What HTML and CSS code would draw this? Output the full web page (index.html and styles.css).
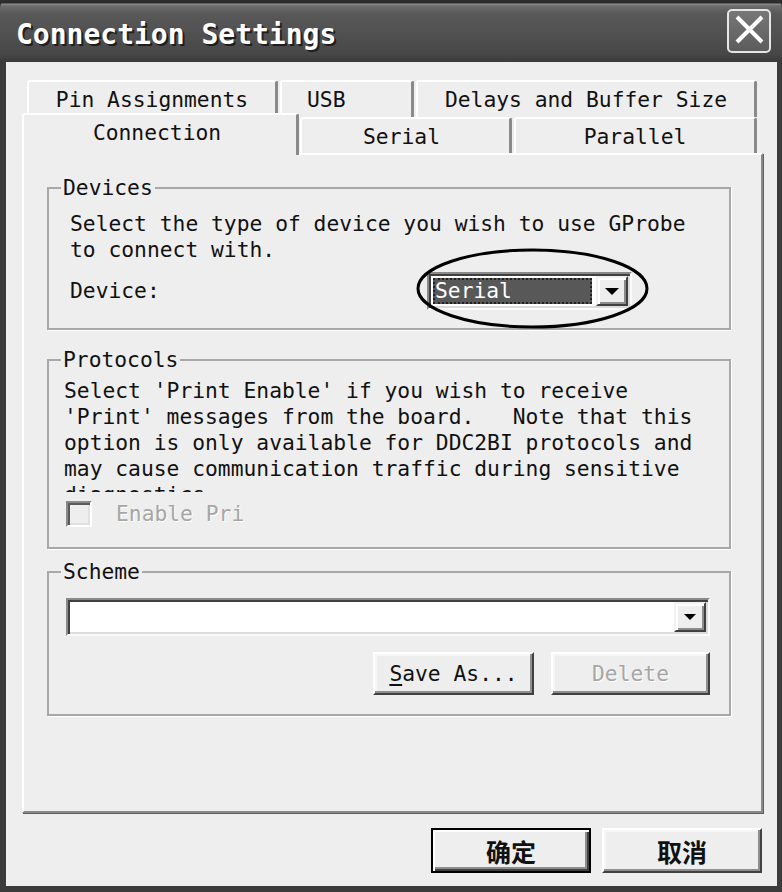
FILE: index.html
```html
<!DOCTYPE html>
<html>
<head>
<meta charset="utf-8">
<title>Connection Settings</title>
<link rel="stylesheet" href="styles.css">
</head>
<body>
<div class="window">
  <div class="titlebar">
    <span class="title">Connection Settings</span>
    <span class="close">
      <svg width="40" height="40" viewBox="0 0 40 40"><path d="M8 6 L33 31 M33 6 L8 31" stroke="#fff" stroke-width="4" fill="none"/></svg>
    </span>
  </div>
  <div class="client">
    <div class="tabs">
      <div class="tabrow back">
        <div class="tab t-pin">Pin Assignments</div>
        <div class="tab t-usb">USB</div>
        <div class="tab t-delays">Delays and Buffer Size</div>
      </div>
      <div class="tabrow front">
        <div class="tab selected t-conn">Connection</div>
        <div class="tab t-serial">Serial</div>
        <div class="tab t-parallel">Parallel</div>
      </div>
    </div>
    <div class="panel">
      <fieldset class="group g-devices">
        <legend>Devices</legend>
        <div class="inner">
          <p class="text">Select the type of device you wish to use GProbe<br>to connect with.</p>
          <div class="device-row">
            <span class="label">Device:</span>
            <div class="combo combo-device">
              <span class="sel">Serial</span>
              <span class="drop"><span class="arrow"></span></span>
              <svg class="ring" width="233" height="81" viewBox="0 0 233 81"><ellipse cx="116.5" cy="40.5" rx="114.5" ry="38.5" fill="none" stroke="#000" stroke-width="3"/></svg>
            </div>
          </div>
        </div>
      </fieldset>
      <fieldset class="group g-protocols">
        <legend>Protocols</legend>
        <div class="inner">
          <p class="text clip">Select 'Print Enable' if you wish to receive
'Print' messages from the board.   Note that this
option is only available for DDC2BI protocols and
may cause communication traffic during sensitive
diagnostics.</p>
          <div class="check-row">
            <span class="checkbox"></span>
            <span class="disabled-text">Enable Pri</span>
          </div>
        </div>
      </fieldset>
      <fieldset class="group g-scheme">
        <legend>Scheme</legend>
        <div class="inner">
          <div class="combo combo-scheme">
            <span class="field"></span>
            <span class="drop small"><span class="arrow"></span></span>
          </div>
          <div class="btn-row">
            <button class="btn btn-save"><u>S</u>ave As...</button>
            <button class="btn btn-delete" disabled>Delete</button>
          </div>
        </div>
      </fieldset>
    </div>
    <div class="footer">
      <button class="btn cjk default">确定</button>
      <button class="btn cjk">取消</button>
    </div>
  </div>
</div>
</body>
</html>
```

FILE: styles.css
```css
* { box-sizing: border-box; }
html, body { margin: 0; padding: 0; }
body {
  width: 782px;
  height: 892px;
  background: #2e2e2e;
  font-family: "DejaVu Sans Mono", "Liberation Mono", monospace;
  font-size: 21.3px;
  color: #111;
  overflow: hidden;
}

.window {
  width: 782px;
  height: 892px;
  display: flex;
  flex-direction: column;
  background: #3b3b3b;
  border-radius: 8px 8px 0 0;
  overflow: hidden;
}

.titlebar {
  height: 62px;
  flex: none;
  display: flex;
  align-items: center;
  justify-content: space-between;
  padding: 0 11px 0 16px;
  background: linear-gradient(#2c2c2c 0, #2c2c2c 3px, #8e8e8e 4px, #6c6c6c 6px, #585858 14px, #4f4f4f 38px, #474747 54px, #3a3a3a 62px);
}

.title {
  font-family: "DejaVu Sans Mono", monospace;
  font-weight: bold;
  font-size: 28px;
  color: #fff;
  text-shadow: 2px 2px 0 #1e1e1e;
  padding-top: 6px;
}

.close {
  width: 44px;
  height: 44px;
  border: 2px solid #e6e6e6;
  border-radius: 5px;
  background: linear-gradient(#777, #5c5c5c);
  display: flex;
}

.client {
  flex: 1;
  margin: 0 5px 6px 6px;
  background: #eeeeee;
  display: flex;
  flex-direction: column;
}

/* tabs */
.tabs {
  height: 91px;
  flex: none;
  padding-top: 18px;
  display: flex;
  flex-direction: column;
}
.tabrow { display: flex; }
.back { height: 37px; padding-left: 21px; }
.front { height: 36px; padding-left: 16px; }

.tab {
  background: #eeeeee;
  border-top: 2px solid #fff;
  border-left: 2px solid #fff;
  border-right: 3px solid #8a8a8a;
  border-radius: 3px 3px 0 0;
  display: flex;
  align-items: center;
  justify-content: center;
  white-space: pre;
}
.t-pin { width: 251px; }
.t-usb { width: 134px; margin-left: 2px; justify-content: flex-start; padding-left: 25px; }
.t-delays { width: 341px; margin-left: 2px; }
.t-conn {
  width: 277px;
  height: 42px;
  margin-top: -4px;
  padding-bottom: 6px;
  padding-right: 6px;
  position: relative;
  z-index: 2;
}
.t-serial { width: 212px; margin-left: 1px; padding-right: 8px; }
.t-parallel { width: 243px; margin-left: 2px; }

/* panel */
.panel {
  margin-left: 16px;
  width: 741px;
  height: 660px;
  flex: none;
  border: 2px solid;
  border-color: #fff #8a8a8a #8a8a8a #fff;
  box-shadow: 1px 1px 0 #5e5e5e;
  padding: 20px 0 0 23px;
  display: flex;
  flex-direction: column;
  position: relative;
  z-index: 1;
}

.group {
  margin: 0;
  padding: 0;
  width: 684px;
  min-inline-size: 0;
  border: 2px solid #a8a8a8;
  box-shadow: 1px 1px 0 #fff;
}
.group legend {
  margin-left: 12px;
  padding: 0 2px;
  line-height: 26px;
}
.text {
  margin: 0;
  line-height: 26px;
  white-space: pre;
}

.g-devices .inner { padding: 10px 0 18px 21px; }
.device-row {
  margin-top: 9px;
  display: flex;
  align-items: center;
  height: 38px;
}
.label { width: 357px; line-height: 26px; }

.g-protocols { margin-top: 17px; }
.g-protocols .inner { padding: 5px 0 20px 15px; }
.clip { height: 114px; overflow: hidden; }
.check-row {
  margin-top: 9px;
  display: flex;
  align-items: center;
  height: 26px;
  padding-left: 2px;
}
.checkbox {
  width: 26px;
  height: 26px;
  border: 2px solid;
  border-color: #8a8a8a #fff #fff #8a8a8a;
  box-shadow: inset 2px 2px 0 #5a5a5a, inset -2px -2px 0 #e0e0e0;
  background: #eeeeee;
}
.disabled-text {
  margin-left: 24px;
  color: #a6a6a6;
  text-shadow: 1px 1px 0 #fff;
  line-height: 26px;
}

.g-scheme { margin-top: 10px; }
.g-scheme .inner { padding: 13px 19px 19px 17px; }

/* combo */
.combo {
  height: 38px;
  border: 2px solid;
  border-color: #8a8a8a #fbfbfb #fbfbfb #8a8a8a;
  box-shadow: inset 2px 2px 0 #404040, inset -2px -2px 0 #dcdcdc;
  background: #fff;
  display: flex;
  padding: 2px;
  position: relative;
}
.combo-device { width: 205px; }
.combo-scheme { width: 644px; }
.sel {
  flex: 1;
  margin: 2px 4px 2px 2px;
  background: #585858;
  color: #fff;
  outline: 2px dotted #222;
  outline-offset: -2px;
  line-height: 26px;
  padding-left: 2px;
}
.field { flex: 1; }
.drop {
  width: 32px;
  border: 2px solid;
  border-color: #f2f2f2 #404040 #404040 #f2f2f2;
  box-shadow: inset 2px 2px 0 #fff, inset -2px -2px 0 #8c8c8c;
  background: #eeeeee;
  display: flex;
  align-items: center;
  justify-content: center;
}
.arrow {
  width: 0;
  height: 0;
  border-left: 7px solid transparent;
  border-right: 7px solid transparent;
  border-top: 7px solid #000;
}
.small .arrow {
  border-left-width: 6px;
  border-right-width: 6px;
  border-top-width: 6px;
}
.ring {
  position: absolute;
  left: -13px;
  top: -26px;
  pointer-events: none;
}

/* buttons */
.btn-row {
  margin-top: 16px;
  display: flex;
  justify-content: flex-end;
  gap: 17px;
}
.btn {
  font-family: "DejaVu Sans Mono", "Liberation Mono", monospace;
  font-size: 21.3px;
  color: #111;
  height: 43px;
  background: #eeeeee;
  border: 2px solid;
  border-color: #fff #404040 #404040 #fff;
  box-shadow: inset -2px -2px 0 #8e8e8e, inset 2px 2px 0 #f6f6f6;
  padding: 0;
  margin: 0;
}
.btn u { text-decoration-thickness: 2px; text-underline-offset: 3px; }
.btn-save { width: 161px; }
.btn-delete { width: 159px; color: #a6a6a6; text-shadow: 1px 1px 0 #fff; }

.footer {
  display: flex;
  justify-content: flex-end;
  gap: 11px;
  padding: 15px 15px 0 0;
}
.cjk {
  font-family: "Noto Sans CJK SC", sans-serif;
  font-weight: bold;
  font-size: 25px;
  width: 160px;
  height: 45px;
}
.default {
  border: 2px solid #000;
  box-shadow: inset 2px 2px 0 #fff, inset -2px -2px 0 #404040, inset -4px -4px 0 #8e8e8e;
}
```
